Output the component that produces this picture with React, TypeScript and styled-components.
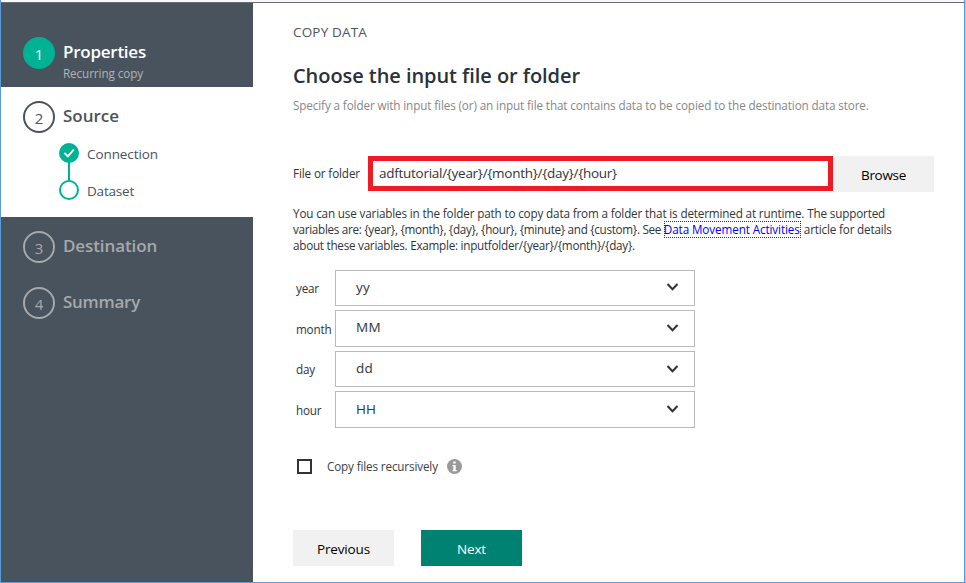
import React from 'react';
import styled, { createGlobalStyle } from 'styled-components';

const GlobalStyle = createGlobalStyle`
  *, *::before, *::after { box-sizing: border-box; }
  body { margin: 0; background: #fff; }
  button, input { font-family: inherit; margin: 0; border-radius: 0; }
`;

const Frame = styled.div`
  display: flex;
  flex-direction: column;
  width: 966px;
  height: 583px;
  border-left: 1px solid #5b9bd5;
  border-bottom: 1px solid #5b9bd5;
  border-right: 1px solid #b4cde6;
  background: #fff;
  font-family: 'Open Sans', 'Segoe UI', sans-serif;
  color: #2f343a;
  overflow: hidden;
`;

const TopEdge = styled.div`
  flex: none;
  height: 3px;
  background: #f7f8f9;
  border-bottom: 1px solid #696b6e;
  border-right: 1px solid #5b9bd5;
`;

const Columns = styled.div`
  display: flex;
  flex: 1;
  border-right: 1px solid #5b9bd5;
`;

const Sidebar = styled.nav`
  display: flex;
  flex-direction: column;
  width: 252px;
  background: #49535e;
`;

const StepGroup = styled.section<{ $height: number; $top: number; $active?: boolean }>`
  height: ${(p) => p.$height}px;
  padding: ${(p) => p.$top}px 0 0 22px;
  background: ${(p) => (p.$active ? '#fff' : 'transparent')};
`;

const stepColors = {
  done: { text: '#ffffff', ring: '#00b294', fill: '#00b294', number: '#ffffff' },
  current: { text: '#49535e', ring: '#49535e', fill: 'transparent', number: '#49535e' },
  pending: { text: '#a6a8aa', ring: '#a6a8aa', fill: 'transparent', number: '#a6a8aa' },
};
type StepState = keyof typeof stepColors;

const StepRow = styled.div`
  display: flex;
  gap: 8px;
  height: 32px;
`;

const StepNumber = styled.span<{ $state: StepState }>`
  width: 32px;
  height: 32px;
  padding-top: 1px;
  border: 2px solid ${(p) => stepColors[p.$state].ring};
  border-radius: 50%;
  background: ${(p) => stepColors[p.$state].fill};
  color: ${(p) => stepColors[p.$state].number};
  font-size: 15px;
  font-weight: 400;
  line-height: 28px;
  text-align: center;
`;

const StepTitle = styled.span<{ $state: StepState; $spacing: number }>`
  color: ${(p) => stepColors[p.$state].text};
  font-size: 17px;
  font-weight: 600;
  line-height: 30px;
  letter-spacing: ${(p) => p.$spacing}px;
`;

const StepNote = styled.div`
  margin: -4px 0 0 40px;
  color: #b0b3b6;
  font-size: 11.7px;
  line-height: 16px;
  letter-spacing: -0.09px;
`;

const SubSteps = styled.div`
  display: flex;
  gap: 8px;
  padding: 10px 0 0 36px;
`;

const SubLabels = styled.div`
  display: flex;
  flex-direction: column;
  gap: 17px;
`;

const SubLabel = styled.span<{ $spacing: number }>`
  height: 20px;
  color: #49535e;
  font-size: 13.5px;
  line-height: 22px;
  letter-spacing: ${(p) => p.$spacing}px;
`;

const Content = styled.main`
  flex: 1;
  padding: 18px 0 0 40px;
`;

const Eyebrow = styled.div`
  color: #505357;
  font-size: 13.5px;
  line-height: 22px;
  letter-spacing: 0.17px;
`;

const Heading = styled.h1`
  margin: 18px 0 0;
  color: #2b3138;
  font-size: 20px;
  font-weight: 600;
  line-height: 30px;
  letter-spacing: -0.061px;
`;

const Lead = styled.p`
  margin: 6px 0 0;
  color: #85888b;
  font-size: 11.7px;
  line-height: 16px;
  letter-spacing: -0.116px;
  white-space: nowrap;
`;

const PathRow = styled.div`
  display: flex;
  height: 36px;
  margin-top: 43px;
`;

const PathLabel = styled.label`
  width: 75px;
  font-size: 11.7px;
  line-height: 35px;
  letter-spacing: -0.13px;
`;

const PathInput = styled.input`
  width: 465px;
  height: 35px;
  padding: 0 6px 2px;
  border: 5px solid #ee1b24;
  background: #fff;
  color: #2f343a;
  font-size: 13.5px;
  line-height: 23px;
  letter-spacing: -0.275px;
  outline: none;
`;

const Button = styled.button<{ $primary?: boolean; $spacing: number }>`
  width: 101px;
  height: 36px;
  padding: 2px 0 0;
  border: 0;
  background: ${(p) => (p.$primary ? '#008272' : '#f1f1f1')};
  color: ${(p) => (p.$primary ? '#fff' : '#000')};
  font-size: 13.5px;
  letter-spacing: ${(p) => p.$spacing}px;
`;

const Help = styled.div`
  margin-top: 13px;
  font-size: 11.7px;
  line-height: 16px;
`;

const HelpLine = styled.div<{ $spacing: number }>`
  height: 16px;
  letter-spacing: ${(p) => p.$spacing}px;
  white-space: nowrap;
`;

const DocLink = styled.a`
  display: inline-flex;
  width: 137px;
  height: 17px;
  margin: 0 3px 0 0;
  color: #0000ee;
  letter-spacing: -0.11px;
  line-height: 17px;
  outline: 1px dotted #333;
  outline-offset: -1px;
`;

const AfterLink = styled.span`
  letter-spacing: -0.17px;
`;

const Fields = styled.div`
  display: flex;
  flex-direction: column;
  gap: 4px;
  margin-top: 17px;
`;

const Field = styled.div<{ $height: number }>`
  display: flex;
  height: ${(p) => p.$height}px;
`;

const FieldLabel = styled.label<{ $top: number }>`
  width: 42px;
  padding: ${(p) => p.$top}px 0 0 3px;
  font-size: 11.7px;
  line-height: 35px;
  letter-spacing: -0.2px;
`;

const Select = styled.div<{ $spacing: number; $line: number }>`
  display: flex;
  justify-content: space-between;
  width: 360px;
  padding: 0 16px 0 20px;
  border: 1px solid #bababc;
  font-size: 13.5px;
  line-height: ${(p) => p.$line}px;
  letter-spacing: ${(p) => p.$spacing}px;
`;

const Chevron = styled.svg<{ $top: number }>`
  width: 11px;
  height: 8px;
  margin-top: ${(p) => p.$top}px;
`;

const CheckRow = styled.div`
  display: flex;
  align-items: center;
  height: 15px;
  margin: 31px 0 0 4px;
`;

const CheckBox = styled.span`
  width: 15px;
  height: 15px;
  border: 2px solid #333;
`;

const CheckLabel = styled.span`
  width: 120px;
  height: 17px;
  margin-left: 15px;
  font-size: 11.7px;
  line-height: 16px;
  letter-spacing: -0.145px;
  color: #3c4045;
`;

const Actions = styled.div`
  display: flex;
  gap: 27px;
  margin-top: 56px;
`;

function Step({ n, title, state, spacing }: { n: number; title: string; state: StepState; spacing: number }) {
  return (
    <StepRow>
      <StepNumber $state={state}>{n}</StepNumber>
      <StepTitle $state={state} $spacing={spacing}>{title}</StepTitle>
    </StepRow>
  );
}

const fields = [
  { label: 'year', value: 'yy', height: 36, chevron: 12, spacing: 0.2, labelTop: 1, line: 33 },
  { label: 'month', value: 'MM', height: 37, chevron: 13, spacing: 0.3, labelTop: 2, line: 33 },
  { label: 'day', value: 'dd', height: 36, chevron: 13, spacing: 0.2, labelTop: 1, line: 33 },
  { label: 'hour', value: 'HH', height: 37, chevron: 13, spacing: 0, labelTop: 2, line: 35 },
];

export default function App() {
  return (
    <>
      <GlobalStyle />
      <Frame>
        <TopEdge />
        <Columns>
          <Sidebar>
            <StepGroup $height={84} $top={34}>
              <Step n={1} title="Properties" state="done" spacing={-0.25} />
              <StepNote>Recurring copy</StepNote>
            </StepGroup>
            <StepGroup $height={130} $top={14} $active>
              <Step n={2} title="Source" state="current" spacing={0} />
              <SubSteps>
                <svg width="20" height="57" viewBox="0 0 20 57" fill="none">
                  <path d="M10 19v19" stroke="#00b294" strokeWidth="2" />
                  <circle cx="10" cy="10" r="10" fill="#00b294" />
                  <path d="M5.4 9.9l3.4 3.4 6-6.6" stroke="#fff" strokeWidth="2" />
                  <circle cx="10" cy="47" r="9" stroke="#00b294" strokeWidth="2" />
                </svg>
                <SubLabels>
                  <SubLabel $spacing={-0.08}>Connection</SubLabel>
                  <SubLabel $spacing={-0.2}>Dataset</SubLabel>
                </SubLabels>
              </SubSteps>
            </StepGroup>
            <StepGroup $height={56} $top={14}>
              <Step n={3} title="Destination" state="pending" spacing={-0.11} />
            </StepGroup>
            <StepGroup $height={56} $top={14}>
              <Step n={4} title="Summary" state="pending" spacing={-0.27} />
            </StepGroup>
          </Sidebar>
          <Content>
            <Eyebrow>COPY DATA</Eyebrow>
            <Heading>Choose the input file or folder</Heading>
            <Lead>
              Specify a folder with input files (or) an input file that contains data to be copied to the destination data store.
            </Lead>
            <PathRow>
              <PathLabel htmlFor="path">File or folder</PathLabel>
              <PathInput id="path" readOnly value="adftutorial/{year}/{month}/{day}/{hour}" />
              <Button $spacing={-0.3}>Browse</Button>
            </PathRow>
            <Help>
              <HelpLine $spacing={-0.155}>
                You can use variables in the folder path to copy data from a folder that is determined at runtime. The supported
              </HelpLine>
              <HelpLine $spacing={-0.3}>
                {'variables are: {year}, {month}, {day}, {hour}, {minute} and {custom}. See '}
                <DocLink>Data Movement Activities</DocLink>
                <AfterLink>article for details</AfterLink>
              </HelpLine>
              <HelpLine $spacing={-0.255}>{'about these variables. Example: inputfolder/{year}/{month}/{day}.'}</HelpLine>
            </Help>
            <Fields>
              {fields.map((f) => (
                <Field key={f.label} $height={f.height}>
                  <FieldLabel $top={f.labelTop}>{f.label}</FieldLabel>
                  <Select $spacing={f.spacing} $line={f.line}>
                    {f.value}
                    <Chevron $top={f.chevron} viewBox="0 0 11 8">
                      <path d="M0.5 1l5 5.2 5-5.2" fill="none" stroke="#333" strokeWidth="2" />
                    </Chevron>
                  </Select>
                </Field>
              ))}
            </Fields>
            <CheckRow>
              <CheckBox />
              <CheckLabel>Copy files recursively</CheckLabel>
              <svg width="15" height="15" viewBox="0 0 15 15">
                <circle cx="7.5" cy="7.5" r="7.5" fill="#999" />
                <path d="M6.2 2.6h2.5v2H6.2zM5.4 6h3.3v5h1v1.2H5.4V11h.9V7.1h-.9z" fill="#fff" />
              </svg>
            </CheckRow>
            <Actions>
              <Button $spacing={-0.15}>Previous</Button>
              <Button $primary $spacing={-0.15}>Next</Button>
            </Actions>
          </Content>
        </Columns>
      </Frame>
    </>
  );
}
